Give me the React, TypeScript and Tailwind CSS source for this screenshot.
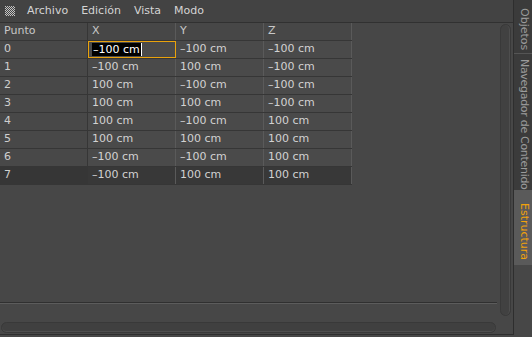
const rows = [
  ["–100 cm", "–100 cm", "–100 cm"],
  ["–100 cm", "100 cm", "–100 cm"],
  ["100 cm", "–100 cm", "–100 cm"],
  ["100 cm", "100 cm", "–100 cm"],
  ["100 cm", "–100 cm", "100 cm"],
  ["100 cm", "100 cm", "100 cm"],
  ["–100 cm", "–100 cm", "100 cm"],
  ["–100 cm", "100 cm", "100 cm"],
];

const menu = ["Archivo", "Edición", "Vista", "Modo"];

function GridIcon() {
  const dots = [];
  for (let y = 0; y < 10; y++) {
    for (let x = 0; x < 10; x++) {
      if ((x + y) % 2 === 0) dots.push(<rect key={`${x}-${y}`} x={x} y={y} width="1" height="1" />);
    }
  }
  return (
    <svg width="10" height="10" viewBox="0 0 10 10" className="fill-[#c4c4c4] shrink-0">
      {dots}
    </svg>
  );
}

function Cell({ text, last, selected }: { text: string; last: boolean; selected?: boolean }) {
  if (selected) {
    return (
      <div className="h-[17px] bg-[#4a4a4a] border border-[#e9a20c] flex items-center pl-[3px]">
        <span className="bg-black text-white leading-[13px] px-px">{text}</span>
        <span className="w-px h-[13px] bg-white" />
      </div>
    );
  }
  return (
    <div
      className={
        "h-[17px] flex items-center pl-[4px] border-r border-[#5a5a5a] text-[#d2d2d2] " +
        (last ? "bg-[#383838]" : "bg-[#4a4a4a]")
      }
    >
      {text}
    </div>
  );
}

export default function App() {
  return (
    <div className="w-[532px] h-[337px] flex bg-[#474747] overflow-hidden font-['DejaVu_Sans',sans-serif] text-[11px] select-none">
      <div className="w-[514px] h-[335px] flex flex-col border-r border-b border-[#2e2e2e]">
        {/* menu bar */}
        <div className="h-[23px] shrink-0 flex items-center gap-[13px] pl-[5px] bg-[#434343] border-b border-[#313131] text-[#d4d4d4]">
          <div className="-mr-[1px]">
            <GridIcon />
          </div>
          {menu.map((m) => (
            <span key={m}>{m}</span>
          ))}
        </div>

        <div className="flex-1 flex min-h-0">
          <div className="w-[497px] flex flex-col">
            <div className="w-[352px] grid grid-cols-[88px_88px_88px_88px] gap-y-px bg-[#363636] pb-px">
              {["Punto", "X", "Y", "Z"].map((h, j) => (
                <div
                  key={h}
                  className={
                    "h-[17px] flex items-center pl-[4px] bg-[#474747] text-[#c8c8c8] border-r " +
                    (j === 0 ? "border-[#363636]" : "border-[#5a5a5a]")
                  }
                >
                  {h}
                </div>
              ))}
              {rows.map((r, i) => (
                <div key={i} className="contents">
                  <div
                    className={
                      "h-[17px] flex items-center pl-[4px] text-[#cfcfcf] border-r border-[#363636] " +
                      (i === 7 ? "bg-[#363636]" : "bg-[#484848]")
                    }
                  >
                    {i}
                  </div>
                  {r.map((v, j) => (
                    <Cell key={j} text={v} last={i === 7} selected={i === 0 && j === 0} />
                  ))}
                </div>
              ))}
            </div>
            <div className="flex-1" />
            <div className="h-[2px] border-t border-[#303030] border-b border-b-[#5c5c5c]" />
            <div className="h-[18px]" />
            <div className="h-[11px] ml-[1px] mr-[1px] rounded-full bg-[#404040] border border-[#393939] shadow-[inset_0_-1px_0_#4e4e4e]" />
            <div className="h-[1px]" />
          </div>
          <div className="flex-1 pl-[3px] pr-[2px] pt-[1px] pb-[18px]">
            <div className="w-[11px] h-full rounded-full bg-[#414141] border border-[#393939] shadow-[inset_-1px_0_0_#4e4e4e]" />
          </div>
        </div>
      </div>

      <div className="flex-1 flex flex-col">
        <div className="h-[54px] bg-[#3b3b3b] border-b border-[#555555] flex justify-center pt-[5px] text-[#9b9b9b] [writing-mode:vertical-rl]">
          Objetos
        </div>
        <div className="h-[136px] bg-[#3b3b3b] flex justify-center pt-[5px] text-[#9b9b9b] whitespace-nowrap tracking-[-0.3px] [writing-mode:vertical-rl]">
          Navegador de Contenido
        </div>
        <div className="h-[75px] bg-[#5a5a5a] flex justify-center pt-[8px] text-[#f2a20a] [writing-mode:vertical-rl]">
          Estructura
        </div>
        <div className="flex-1" />
      </div>
    </div>
  );
}
